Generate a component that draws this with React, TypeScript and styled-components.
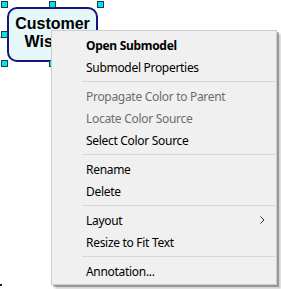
import React from "react";
import styled, { createGlobalStyle } from "styled-components";

const GlobalStyle = createGlobalStyle`
  html, body { margin: 0; padding: 0; background: #ffffff; }
  #root { width: 281px; height: 289px; }
`;

const Canvas = styled.div`
  position: relative;
  width: 281px;
  height: 289px;
  overflow: hidden;
  background: #ffffff;
`;

const Connector = styled.div`
  position: absolute;
  left: 0;
  top: 37px;
  width: 8px;
  height: 1px;
  background: #8a8a8a;
`;

const Node = styled.div`
  position: absolute;
  left: 7px;
  top: 7px;
  width: 91px;
  height: 55px;
  box-sizing: border-box;
  border: 2px solid #15157a;
  border-radius: 10px;
  background: #e6f7fa;
  display: flex;
  flex-direction: column;
  align-items: center;
  justify-content: center;
  padding-bottom: 3px;
  font-family: "Liberation Sans", Arial, sans-serif;
  font-weight: bold;
  font-size: 16px;
  line-height: 18px;
  color: #000000;
`;

const Handle = styled.div<{ $x: number; $y: number }>`
  position: absolute;
  left: ${(p) => p.$x}px;
  top: ${(p) => p.$y}px;
  width: 5px;
  height: 5px;
  background: #00e5f0;
  border: 1px solid #1b3c4c;
`;

const Dot = styled.div`
  position: absolute;
  left: 0;
  top: 284px;
  width: 2px;
  height: 2px;
  background: #3a1a08;
`;

const Menu = styled.div`
  position: absolute;
  left: 51px;
  top: 30px;
  width: 226px;
  box-sizing: border-box;
  padding: 3px 0 2px 0;
  background: #f0f0f0;
  border: 1px solid #cccccc;
  box-shadow: 2px 2px 0 rgba(0, 0, 0, 0.28), 4px 4px 2px rgba(0, 0, 0, 0.18);
  font-family: "Noto Sans", "Segoe UI", sans-serif;
  font-size: 12px;
  letter-spacing: -0.3px;
  color: #000000;
`;

const Item = styled.div<{ $disabled?: boolean; $bold?: boolean }>`
  height: 22px;
  display: flex;
  align-items: center;
  justify-content: space-between;
  padding: 0 11px 0 34px;
  white-space: nowrap;
  color: ${(p) => (p.$disabled ? "#6d6d6d" : "#000000")};
  font-weight: ${(p) => (p.$bold ? 700 : 400)};
`;

const Separator = styled.div`
  height: 7px;
  display: flex;
  align-items: center;
  margin: 0 1px 0 30px;
  &::after {
    content: "";
    flex: 1;
    height: 1px;
    background: #d7d7d7;
  }
`;

const Chevron = () => (
  <svg width="5" height="8" viewBox="0 0 5 8">
    <polyline points="0.5,0.5 4,4 0.5,7.5" fill="none" stroke="#333" strokeWidth="1" />
  </svg>
);

const handles: Array<[number, number]> = [
  [1, 1], [49, 1], [97, 1],
  [1, 31],
  [1, 60], [49, 60],
];

export default function App() {
  return (
    <>
      <GlobalStyle />
      <Canvas>
        <Connector />
        <Node>
          <span>Customer</span>
          <span>Wishes</span>
        </Node>
        {handles.map(([x, y]) => (
          <Handle key={`${x}-${y}`} $x={x} $y={y} />
        ))}
        <Dot />
        <Menu>
          <Item $bold>Open Submodel</Item>
          <Item>Submodel Properties</Item>
          <Separator />
          <Item $disabled>Propagate Color to Parent</Item>
          <Item $disabled>Locate Color Source</Item>
          <Item>Select Color Source</Item>
          <Separator />
          <Item>Rename</Item>
          <Item>Delete</Item>
          <Separator />
          <Item>
            <span>Layout</span>
            <Chevron />
          </Item>
          <Item>Resize to Fit Text</Item>
          <Separator />
          <Item>Annotation...</Item>
        </Menu>
      </Canvas>
    </>
  );
}
